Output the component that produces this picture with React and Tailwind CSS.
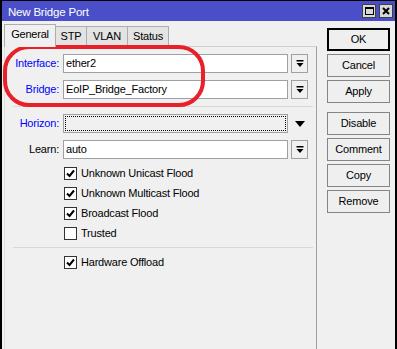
import React from 'react';

// botones de la columna derecha
const Boton = ({ texto, principal }) => (
  <div
    className={`w-[63px] h-[23px] flex items-center justify-center bg-[#efefef] text-black ${
      principal ? 'border-2 border-black' : 'border border-[#858585]'
    }`}
  >
    {texto}
  </div>
);

const FlechaLista = () => (
  <svg width="8" height="8" viewBox="0 0 8 8">
    <rect x="0.5" y="0" width="7" height="1.5" fill="#000" />
    <path d="M0.5 3h7L4 7z" fill="#000" />
  </svg>
);

const Check = ({ marcado, texto }) => (
  <div className="h-[20px] flex items-center pl-[59px] gap-[4px]">
    <div className="w-[13px] h-[13px] bg-white border border-[#333] flex items-center justify-center">
      {marcado && (
        <svg width="9" height="9" viewBox="0 0 9 9">
          <path d="M1 4.5 L3.5 7 L8 1.5" stroke="#000" strokeWidth="2" fill="none" />
        </svg>
      )}
    </div>
    <span>{texto}</span>
  </div>
);

const Campo = ({ etiqueta, valor, azul }) => (
  <div className="flex items-center h-[19px]">
    <span className={`w-[54px] text-right ${azul ? 'text-[#0000ff]' : 'text-black'}`}>{etiqueta}</span>
    <div className="ml-[4px] w-[225px] h-[19px] bg-white border border-[#a0a0a0] flex items-center pl-[2px] text-black">
      {valor}
    </div>
    <div className="ml-[3px] w-[17px] h-[19px] border border-[#a0a0a0] bg-[#f0f0f0] flex items-center justify-center">
      <FlechaLista />
    </div>
  </div>
);

const Separador = () => <div className="ml-[8px] w-[300px] h-px bg-[#d8d8d8]" />;

export default function App() {
  return (
    <div className="relative w-[397px] h-[349px] bg-[#f0f0f0] border-t border-x-2 border-black overflow-hidden text-[11px] tracking-[-0.2px] font-['Liberation_Sans',Arial,sans-serif] flex flex-col">
      {/* barra de título */}
      <div className="h-[20px] bg-[#4a4fc9] flex items-center pl-[6px] pr-[2px] shrink-0">
        <span className="text-white text-[11.5px] pt-[3px]">New Bridge Port</span>
        <div className="ml-auto flex gap-[3px]">
          <div className="w-[14px] h-[14px] bg-[#d8d8d8] border border-[#404040] flex items-center justify-center">
            <div className="w-[9px] h-[8px] border border-black border-t-2" />
          </div>
          <div className="w-[14px] h-[14px] bg-[#d8d8d8] border border-[#404040] flex items-center justify-center">
            <svg width="8" height="8" viewBox="0 0 8 8">
              <path d="M1 1L7 7M7 1L1 7" stroke="#000" strokeWidth="2" />
            </svg>
          </div>
        </div>
      </div>

      <div className="flex flex-1 min-h-0">
        {/* columna izquierda: pestañas y panel */}
        <div className="w-[315px] flex flex-col">
          <div className="h-[25px] flex items-end pl-[2px] shrink-0">
            <div className="relative z-10 -mb-px h-[23px] w-[52px] bg-[#f0f0f0] border-x border-t border-[#adadad] flex items-center justify-center pb-[3px]">
              General
            </div>
            <div className="h-[20px] w-[31px] bg-[#e3e3e3] border-t border-r border-[#adadad] flex items-center justify-center">STP</div>
            <div className="h-[20px] w-[41px] bg-[#e3e3e3] border-t border-r border-[#adadad] flex items-center justify-center">VLAN</div>
            <div className="h-[20px] w-[41px] bg-[#e3e3e3] border-t border-r border-[#adadad] flex items-center justify-center">Status</div>
          </div>

          <div className="flex-1 ml-[2px] border-t border-l border-r border-t-[#d0d0d0] border-l-[#e0e0e0] border-r-[#a0a0a0] pt-[7px] flex flex-col">
            <Campo etiqueta="Interface:" valor="ether2" azul />
            <div className="h-[7px]" />
            <Campo etiqueta="Bridge:" valor="EoIP_Bridge_Factory" azul />
            <div className="h-[7px]" />
            <Separador />
            <div className="h-[7px]" />
            <div className="flex items-center h-[19px]">
              <span className="w-[54px] text-right text-[#0000ff]">Horizon:</span>
              <div className="ml-[4px] w-[225px] h-[19px] border border-[#a0a0a0] bg-[#f0f0f0] p-[1px]">
                <div className="h-full border border-dotted border-black" />
              </div>
              <div className="ml-[3px] w-[17px] flex items-center justify-center">
                <svg width="10" height="6" viewBox="0 0 10 6">
                  <path d="M0 0h10L5 6z" fill="#000" />
                </svg>
              </div>
            </div>
            <div className="h-[7px]" />
            <Campo etiqueta="Learn:" valor="auto" />
            <div className="h-[4px]" />
            <Check marcado texto="Unknown Unicast Flood" />
            <Check marcado texto="Unknown Multicast Flood" />
            <Check marcado texto="Broadcast Flood" />
            <Check texto="Trusted" />
            <div className="h-[4px]" />
            <Separador />
            <div className="h-[4px]" />
            <Check marcado texto="Hardware Offload" />
          </div>
        </div>

        {/* columna derecha: acciones */}
        <div className="flex-1 pl-[10px] pt-[7px] flex flex-col gap-[3px]">
          <Boton texto="OK" principal />
          <Boton texto="Cancel" />
          <Boton texto="Apply" />
          <div className="h-[3px]" />
          <Boton texto="Disable" />
          <Boton texto="Comment" />
          <Boton texto="Copy" />
          <Boton texto="Remove" />
        </div>
      </div>

      {/* marca roja encima */}
      <div className="absolute left-[1px] top-[44px] w-[202px] h-[62px] border-4 border-[#e8202a] rounded-[26px] pointer-events-none" />
    </div>
  );
}
